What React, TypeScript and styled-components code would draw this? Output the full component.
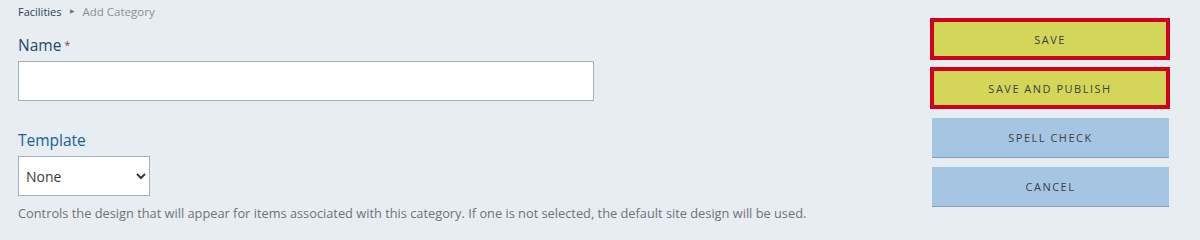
import React from "react";
import styled, { createGlobalStyle } from "styled-components";

const GlobalStyle = createGlobalStyle`
  html, body {
    margin: 0;
    padding: 0;
    background-color: #e8edf1;
    font-family: "Open Sans", "Lato", sans-serif;
  }
`;

const Page = styled.div`
  display: flex;
  justify-content: space-between;
  width: 1200px;
  height: 228px;
  overflow: hidden;
  box-sizing: border-box;
  padding: 0 30px 0 18px;
`;

const Form = styled.div`
  display: flex;
  flex-direction: column;
`;

const Breadcrumb = styled.div`
  display: flex;
  align-items: center;
  gap: 8px;
  height: 22px;
  font-size: 11px;
  color: #8a8f96;
`;

const Crumb = styled.span<{ $current?: boolean }>`
  color: ${(p) => (p.$current ? "#8a8f96" : "#2c3e52")};
  font-size: ${(p) => (p.$current ? 11.5 : 11)}px;
`;

const Arrow = styled.span`
  font-size: 6px;
  color: #6f7780;
`;

const Label = styled.label<{ $tone: "dark" | "blue" }>`
  display: block;
  font-size: 15.5px;
  line-height: 20px;
  color: ${(p) => (p.$tone === "dark" ? "#1f4670" : "#16609f")};
`;

const Required = styled.span`
  font-size: 11px;
  vertical-align: top;
  margin-left: 3px;
  color: #a3374f;
`;

const Field = styled.div<{ $top: number }>`
  margin-top: ${(p) => p.$top}px;
  display: flex;
  flex-direction: column;
  gap: 6px;
`;

const TextInput = styled.input`
  box-sizing: border-box;
  width: 576px;
  height: 40px;
  border: 1px solid #a4b1c0;
  background: #fff;
  margin: 0;
  font-family: inherit;
  font-size: 14px;
`;

const Select = styled.select`
  box-sizing: border-box;
  width: 132px;
  height: 40px;
  border: 1px solid #a4b1c0;
  border-radius: 0;
  background: #fff;
  margin: 0;
  padding: 0 3px;
  font-family: inherit;
  font-size: 14px;
  color: #3a3a3a;
`;

const Help = styled.div`
  margin-top: 8px;
  font-size: 12.8px;
  color: #6e737a;
`;

const Actions = styled.div`
  display: flex;
  flex-direction: column;
  width: 240px;
  padding-top: 18px;
`;

const ActionButton = styled.button<{ $primary?: boolean; $gap: number }>`
  box-sizing: border-box;
  font-family: inherit;
  font-size: 11px;
  letter-spacing: 1.5px;
  text-transform: uppercase;
  color: #3b3f44;
  cursor: pointer;
  padding: 0;
  margin: 0 0 ${(p) => p.$gap}px ${(p) => (p.$primary ? 0 : 2)}px;
  width: ${(p) => (p.$primary ? 240 : 237)}px;
  height: ${(p) => (p.$primary ? 42 : 40)}px;
  background: ${(p) => (p.$primary ? "#d3d658" : "#a6c5e3")};
  border: ${(p) => (p.$primary ? "4px solid #d0021b" : "none")};
  border-bottom: ${(p) =>
    p.$primary ? "4px solid #d0021b" : "1px solid #7d9fc2"};
`;

export default function App() {
  return (
    <>
      <GlobalStyle />
      <Page>
        <Form>
          <Breadcrumb>
            <Crumb>Facilities</Crumb>
            <Arrow>▶</Arrow>
            <Crumb $current>Add Category</Crumb>
          </Breadcrumb>
          <Field $top={13}>
            <Label $tone="dark">
              Name<Required>*</Required>
            </Label>
            <TextInput type="text" />
          </Field>
          <Field $top={29}>
            <Label $tone="blue">Template</Label>
            <Select defaultValue="none">
              <option value="none">None</option>
            </Select>
          </Field>
          <Help>
            Controls the design that will appear for items associated with this
            category. If one is not selected, the default site design will be
            used.
          </Help>
        </Form>
        <Actions>
          <ActionButton $primary $gap={7}>
            Save
          </ActionButton>
          <ActionButton $primary $gap={9}>
            Save and Publish
          </ActionButton>
          <ActionButton $gap={9}>Spell Check</ActionButton>
          <ActionButton $gap={0}>Cancel</ActionButton>
        </Actions>
      </Page>
    </>
  );
}
